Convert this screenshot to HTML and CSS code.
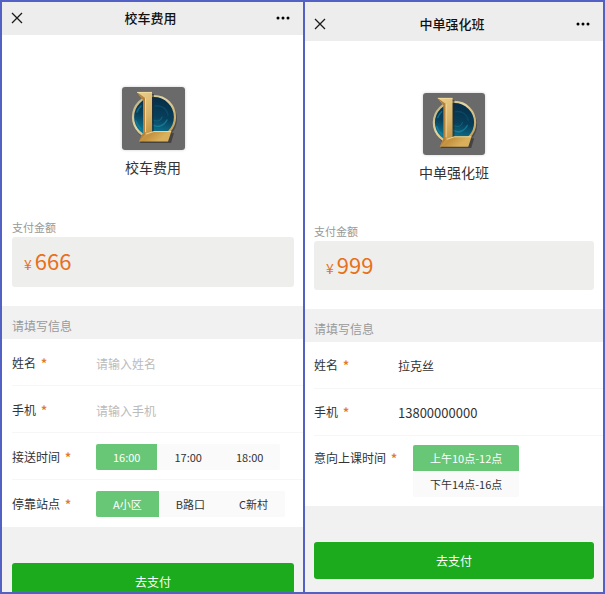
FILE: index.html
```
<!DOCTYPE html>
<html lang="zh-CN">
<head>
    <meta charset="UTF-8">
    <meta name="viewport" content="width=device-width, initial-scale=1.0">
    <title>支付</title>
    <link rel="stylesheet" href="styles.css">
</head>
<body>
    <!-- shared logo artwork -->
    <svg class="defs" width="0" height="0" aria-hidden="true">
        <defs>
            <linearGradient id="gold" x1="0" y1="0" x2="0.6" y2="1">
                <stop offset="0" stop-color="#ecd08c"/>
                <stop offset="0.5" stop-color="#d8b267"/>
                <stop offset="0.8" stop-color="#c4923f"/>
                <stop offset="1" stop-color="#d9b05c"/>
            </linearGradient>
            <linearGradient id="ring" x1="0" y1="0" x2="1" y2="1">
                <stop offset="0" stop-color="#b5a877"/>
                <stop offset="0.4" stop-color="#e3d5a4"/>
                <stop offset="1" stop-color="#b8964e"/>
            </linearGradient>
            <linearGradient id="orb" x1="0.6" y1="0" x2="0.4" y2="1">
                <stop offset="0" stop-color="#062c46"/>
                <stop offset="0.5" stop-color="#07405c"/>
                <stop offset="1" stop-color="#108aa6"/>
            </linearGradient>
            <symbol id="logo" viewBox="0 0 63 63">
                <rect width="63" height="63" fill="#6a6a6a"/>
                <circle cx="33" cy="32" r="22" fill="#3c3a38" opacity="0.6"/>
                <circle cx="32" cy="30" r="21" fill="url(#orb)" stroke="url(#ring)" stroke-width="2.2"/>
                <g fill="none" stroke-linecap="round" opacity="0.6">
                    <path d="M31 38c5 3 11 1 14-5" stroke="#1b93ac" stroke-width="1.4"/>
                    <path d="M31 33c4 2 8 1 9-3" stroke="#15708c" stroke-width="1.2"/>
                    <path d="M33 19c7-1 12 3 13 9" stroke="#0f5470" stroke-width="1.4"/>
                    <path d="M14 34c1 4 3 6 5 8M15 25c1-3 2-4 4-6" stroke="#178ba4" stroke-width="1.6"/>
                </g>
                <path d="M17 7l4 6v34l-3 9h31l3-10-20 1V7z" fill="#2d2a26" opacity="0.6"/>
                <path d="M15 5h15v40l2-1h17.500l-3.500 10.500H17l4-8.500V13z" fill="url(#gold)"/>
                <path d="M15 5l6 8v33l-4 8.500 6-7V11z" fill="#b5813a"/>
                <path d="M15 5.400h15M23.500 11v34" stroke="#f4e0a6" stroke-width="0.8" fill="none"/>
                <path d="M24 47l8-2.500h17" stroke="#f4e0a6" stroke-width="0.8" fill="none"/>
            </symbol>
        </defs>
    </svg>

    <div class="screens">
        <div class="screen">
            <header class="navbar">
                <button type="button" class="icon-btn" aria-label="关闭">
                    <svg width="12" height="12" viewBox="0 0 12 12"><path d="M1 1l10 10M11 1L1 11" stroke="#1a1a1a" stroke-width="1.3" fill="none"/></svg>
                </button>
                <h1>校车费用</h1>
                <button type="button" class="icon-btn more" aria-label="更多">
                    <svg width="14" height="4" viewBox="0 0 14 4"><circle cx="2" cy="2" r="1.5"/><circle cx="7" cy="2" r="1.5"/><circle cx="12" cy="2" r="1.5"/></svg>
                </button>
            </header>

            <form>
                <div class="summary">
                    <svg class="logo"><use href="#logo"/></svg>
                    <h2>校车费用</h2>
                    <p class="amount-label">支付金额</p>
                    <p class="amount"><span class="yen">¥</span>666</p>
                </div>

                <p class="section-title">请填写信息</p>

                <div class="fields">
                    <div class="field">
                        <label class="field-label" for="name1">姓名<span class="star">*</span></label>
                        <input type="text" class="text" id="name1" placeholder="请输入姓名">
                    </div>
                    <div class="field">
                        <label class="field-label" for="phone1">手机<span class="star">*</span></label>
                        <input type="tel" class="text" id="phone1" placeholder="请输入手机">
                    </div>
                    <div class="field" role="radiogroup" aria-labelledby="time1">
                        <span class="field-label" id="time1">接送时间<span class="star">*</span></span>
                        <div class="options">
                            <label><input type="radio" name="time1" checked>16:00</label>
                            <label><input type="radio" name="time1">17:00</label>
                            <label><input type="radio" name="time1">18:00</label>
                        </div>
                    </div>
                    <div class="field" role="radiogroup" aria-labelledby="stop1">
                        <span class="field-label" id="stop1">停靠站点<span class="star">*</span></span>
                        <div class="options">
                            <label><input type="radio" name="stop1" checked>A小区</label>
                            <label><input type="radio" name="stop1">B路口</label>
                            <label><input type="radio" name="stop1">C新村</label>
                        </div>
                    </div>
                </div>

                <div class="actions">
                    <button type="button" class="pay">去支付</button>
                </div>
            </form>
        </div>

        <div class="screen compact">
            <header class="navbar">
                <button type="button" class="icon-btn" aria-label="关闭">
                    <svg width="12" height="12" viewBox="0 0 12 12"><path d="M1 1l10 10M11 1L1 11" stroke="#1a1a1a" stroke-width="1.3" fill="none"/></svg>
                </button>
                <h1>中单强化班</h1>
                <button type="button" class="icon-btn more" aria-label="更多">
                    <svg width="14" height="4" viewBox="0 0 14 4"><circle cx="2" cy="2" r="1.5"/><circle cx="7" cy="2" r="1.5"/><circle cx="12" cy="2" r="1.5"/></svg>
                </button>
            </header>

            <form>
                <div class="summary">
                    <svg class="logo"><use href="#logo"/></svg>
                    <h2>中单强化班</h2>
                    <p class="amount-label">支付金额</p>
                    <p class="amount"><span class="yen">¥</span>999</p>
                </div>

                <p class="section-title">请填写信息</p>

                <div class="fields">
                    <div class="field">
                        <label class="field-label" for="name2">姓名<span class="star">*</span></label>
                        <input type="text" class="text" id="name2" value="拉克丝">
                    </div>
                    <div class="field">
                        <label class="field-label" for="phone2">手机<span class="star">*</span></label>
                        <input type="tel" class="text number" id="phone2" value="13800000000">
                    </div>
                    <div class="field" role="radiogroup" aria-labelledby="time2">
                        <span class="field-label wide" id="time2">意向上课时间<span class="star">*</span></span>
                        <div class="options stacked">
                            <label><input type="radio" name="time2" checked>上午10点-12点</label>
                            <label><input type="radio" name="time2">下午14点-16点</label>
                        </div>
                    </div>
                </div>

                <div class="actions">
                    <button type="button" class="pay">去支付</button>
                </div>
            </form>
        </div>
    </div>
</body>
</html>
```

FILE: styles.css
```
* {
    box-sizing: border-box;
}

body {
    margin: 0;
    font-family: "Noto Sans CJK SC", sans-serif;
    font-size: 12px;
    color: #333;
}

h1, h2, p {
    margin: 0;
}

button, input {
    font-family: inherit;
    border: none;
}

.defs {
    display: block;
}

.screens {
    display: grid;
    grid-template-columns: 301fr 298fr;
    gap: 2px;
    height: 100vh;
    padding: 2px;
    background-color: #5361c4;
}

.screen {
    min-width: 0;
    overflow: hidden;
    background-color: #f1f1f1;
}

/* top bar */
.navbar {
    display: flex;
    align-items: center;
    height: 33px;
    padding: 0 9px 2px;
    background-color: #ededed;
}

.navbar h1 {
    font-size: 13px;
    font-weight: 500;
    line-height: 20px;
    color: #111;
}

.icon-btn {
    display: flex;
    flex: 1;
    padding: 0;
    background: none;
}

.icon-btn.more {
    justify-content: flex-end;
    padding-right: 4px;
}

/* logo, name and amount */
.summary {
    padding: 52px 9px 19px 10px;
    background-color: #fff;
}

.logo {
    display: block;
    width: 63px;
    height: 63px;
    margin: 0 auto;
    border-radius: 3px;
    box-shadow: 0 0 3px rgba(0, 0, 0, 0.2);
}

.summary h2 {
    margin-top: 7px;
    font-size: 14px;
    font-weight: 400;
    line-height: 20px;
    text-align: center;
}

.amount-label {
    margin-top: 42px;
    font-size: 11px;
    line-height: 16px;
    color: #999;
}

.amount {
    display: flex;
    align-items: baseline;
    gap: 3px;
    height: 50px;
    margin-top: 2px;
    padding: 0 12px;
    border-radius: 3px;
    background-color: #eeeeed;
    font-size: 22px;
    line-height: 47px;
    color: #e8701a;
}

.yen {
    font-size: 14px;
}

.section-title {
    padding: 10px 10px 3px;
    line-height: 20px;
    color: #999;
}

/* form rows */
.fields {
    padding-left: 10px;
    background-color: #fff;
}

.field {
    display: flex;
    min-height: 47px;
    padding: 11px 0 9px;
    border-bottom: 1px solid #f6f6f6;
}

.field:last-child {
    border-bottom: none;
}

.field-label {
    flex-shrink: 0;
    width: 84px;
    line-height: 26px;
}

.field-label.wide {
    width: 99px;
}

.star {
    margin-left: 5px;
    font-weight: 700;
    color: #e07a2c;
}

.text {
    flex: 1;
    min-width: 0;
    height: 26px;
    padding: 0;
    background: none;
    font-size: 12px;
    color: #333;
    outline: none;
}

.text::placeholder {
    color: #bbb;
}

.text.number {
    font-size: 13px;
}

.options {
    display: flex;
    align-self: flex-start;
    border-radius: 2px;
    background-color: #fafafa;
    overflow: hidden;
}

.options.stacked {
    flex-direction: column;
}

.options label {
    padding: 0 17px;
    font-size: 11px;
    line-height: 26px;
    cursor: pointer;
}

.options input {
    appearance: none;
    width: 0;
    height: 0;
    margin: 0;
}

.options label:has(input:checked) {
    background-color: #67c777;
    color: #fff;
}

.actions {
    padding: 36px 9px 14px 10px;
}

.pay {
    display: block;
    width: 100%;
    height: 37px;
    border-radius: 3px;
    background-color: #1cab1c;
    font-size: 12px;
    color: #fff;
    cursor: pointer;
}

/* second phone has a slightly taller bar and tighter content */
.compact .navbar {
    height: 39px;
    padding-top: 7px;
}

.compact .summary,
.compact .actions {
    padding-left: 9px;
}

.compact .section-title {
    padding-left: 9px;
}

.compact .fields {
    padding-left: 9px;
}

.compact .logo {
    width: 62px;
    height: 62px;
}

.compact .amount-label {
    margin-top: 41px;
}

.compact .amount {
    height: 49px;
}

.compact .field {
    padding-top: 10px;
}

.compact .field:last-child {
    padding-top: 9px;
}
```
